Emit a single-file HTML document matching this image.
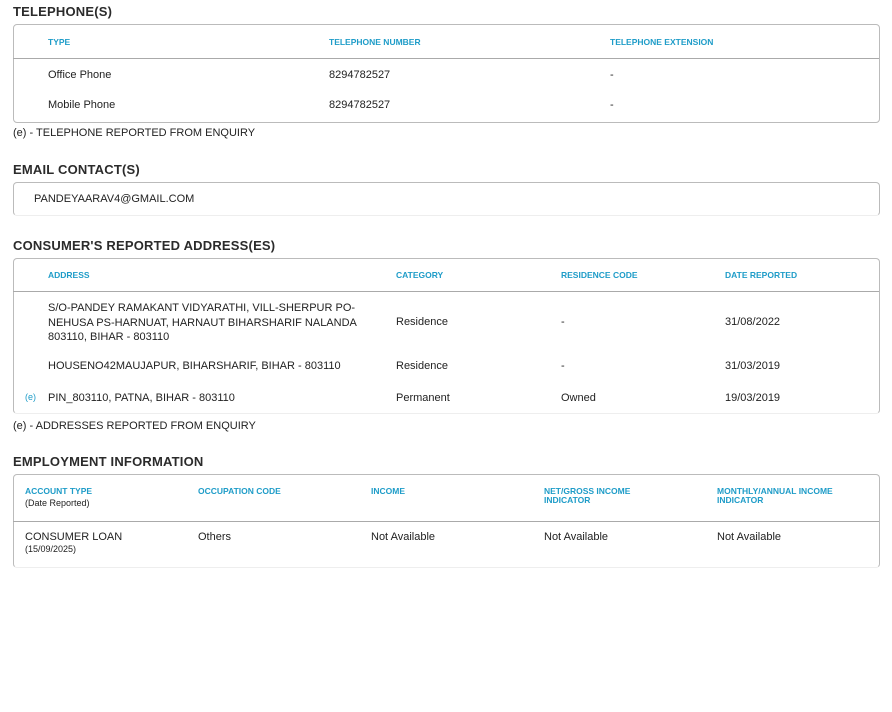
<!DOCTYPE html>
<html><head><meta charset="utf-8"><style>
body{margin:0;width:892px;height:712px;background:#fff;font-family:"Liberation Sans",sans-serif;color:#222;position:relative;overflow:hidden}
.a{position:absolute;white-space:nowrap}
.t{font-size:13px;font-weight:bold;color:#2b2b2b;letter-spacing:.2px}
.h{font-size:8.5px;font-weight:bold;color:#1e9cc8;line-height:9px}
.d{font-size:11px;color:#222;margin-top:2px}
.s{font-size:9px;color:#222}
.box{position:absolute;left:13px;width:865px;border:1px solid #bbb;border-radius:4px}
.nb{border-bottom-color:#eee}
.ln{position:absolute;left:13px;width:866px;height:1px;background:#aaa}
</style></head><body>
<div class="a t" style="left:13px;top:4px">TELEPHONE(S)</div>
<div class="box" style="top:24px;height:97px"></div>
<div class="ln" style="top:58px"></div>
<div class="a h" style="left:48px;top:38px">TYPE</div>
<div class="a h" style="left:329px;top:38px">TELEPHONE NUMBER</div>
<div class="a h" style="left:610px;top:38px">TELEPHONE EXTENSION</div>
<div class="a d" style="left:48px;top:67px">Office Phone</div>
<div class="a d" style="left:329px;top:67px">8294782527</div>
<div class="a d" style="left:610px;top:67px">-</div>
<div class="a d" style="left:48px;top:97px">Mobile Phone</div>
<div class="a d" style="left:329px;top:97px">8294782527</div>
<div class="a d" style="left:610px;top:97px">-</div>
<div class="a d" style="left:13px;top:125px">(e) - TELEPHONE REPORTED FROM ENQUIRY</div>

<div class="a t" style="left:13px;top:162px">EMAIL CONTACT(S)</div>
<div class="box nb" style="top:182px;height:32px"></div>
<div class="a d" style="left:34px;top:191px">PANDEYAARAV4@GMAIL.COM</div>

<div class="a t" style="left:13px;top:238px">CONSUMER'S REPORTED ADDRESS(ES)</div>
<div class="box nb" style="top:258px;height:154px"></div>
<div class="ln" style="top:291px"></div>
<div class="a h" style="left:48px;top:271px">ADDRESS</div>
<div class="a h" style="left:396px;top:271px">CATEGORY</div>
<div class="a h" style="left:561px;top:271px">RESIDENCE CODE</div>
<div class="a h" style="left:725px;top:271px">DATE REPORTED</div>
<div class="a d" style="left:48px;top:299px;line-height:14.5px">S/O-PANDEY RAMAKANT VIDYARATHI, VILL-SHERPUR PO-<br>NEHUSA PS-HARNUAT, HARNAUT BIHARSHARIF NALANDA<br>803110, BIHAR - 803110</div>
<div class="a d" style="left:396px;top:314px">Residence</div>
<div class="a d" style="left:561px;top:314px">-</div>
<div class="a d" style="left:725px;top:314px">31/08/2022</div>
<div class="a d" style="left:48px;top:358px">HOUSENO42MAUJAPUR, BIHARSHARIF, BIHAR - 803110</div>
<div class="a d" style="left:396px;top:358px">Residence</div>
<div class="a d" style="left:561px;top:358px">-</div>
<div class="a d" style="left:725px;top:358px">31/03/2019</div>
<div class="a" style="left:25px;top:392px;font-size:9px;color:#1e9cc8">(e)</div>
<div class="a d" style="left:48px;top:390px">PIN_803110, PATNA, BIHAR - 803110</div>
<div class="a d" style="left:396px;top:390px">Permanent</div>
<div class="a d" style="left:561px;top:390px">Owned</div>
<div class="a d" style="left:725px;top:390px">19/03/2019</div>
<div class="a d" style="left:13px;top:418px">(e) - ADDRESSES REPORTED FROM ENQUIRY</div>

<div class="a t" style="left:13px;top:454px">EMPLOYMENT INFORMATION</div>
<div class="box nb" style="top:474px;height:92px"></div>
<div class="ln" style="top:521px"></div>
<div class="a h" style="left:25px;top:487px">ACCOUNT TYPE</div>
<div class="a s" style="left:25px;top:498px">(Date Reported)</div>
<div class="a h" style="left:198px;top:487px">OCCUPATION CODE</div>
<div class="a h" style="left:371px;top:487px">INCOME</div>
<div class="a h" style="left:544px;top:487px">NET/GROSS INCOME<br>INDICATOR</div>
<div class="a h" style="left:717px;top:487px">MONTHLY/ANNUAL INCOME<br>INDICATOR</div>
<div class="a d" style="left:25px;top:529px">CONSUMER LOAN</div>
<div class="a s" style="left:25px;top:544px">(15/09/2025)</div>
<div class="a d" style="left:198px;top:529px">Others</div>
<div class="a d" style="left:371px;top:529px">Not Available</div>
<div class="a d" style="left:544px;top:529px">Not Available</div>
<div class="a d" style="left:717px;top:529px">Not Available</div>
</body></html>
